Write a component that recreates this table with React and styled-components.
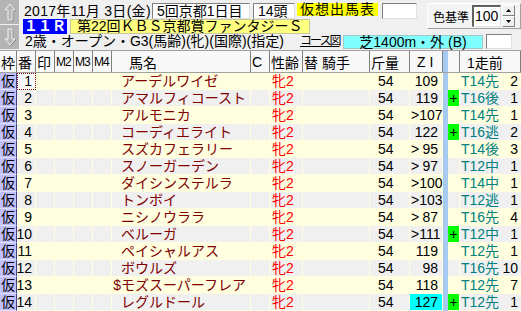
import styled, { createGlobalStyle } from "styled-components";

const GlobalStyle = createGlobalStyle`
  body {
    margin: 0;
    overflow: hidden;
    background: #f0f0f0;
    font-family: "Liberation Sans", "Noto Sans CJK JP", sans-serif;
    font-size: 14px;
    color: #000;
  }
`;

const COLS = "17px 19px 19px 19px 19px 19px 139px 19px 33px 67px 40px 33px 5px 12px 1fr";

const horses = [
  { no: 1, name: "アーデルワイゼ", zi: 109, prev: "T14先", rank: "2" },
  { no: 2, name: "アマルフィコースト", zi: 119, plus: true, prev: "T16後", rank: "1" },
  { no: 3, name: "アルモニカ", zi: 107, gt: true, prev: "T14先", rank: "1" },
  { no: 4, name: "コーディエライト", zi: 122, plus: true, prev: "T16逃", rank: "2" },
  { no: 5, name: "スズカフェラリー", zi: 95, gt: true, prev: "T14後", rank: "3" },
  { no: 6, name: "スノーガーデン", zi: 97, gt: true, prev: "T12中", rank: "1" },
  { no: 7, name: "ダイシンステルラ", zi: 100, gt: true, prev: "T14中", rank: "1" },
  { no: 8, name: "トンボイ", zi: 103, gt: true, prev: "T12逃", rank: "1" },
  { no: 9, name: "ニシノウララ", zi: 87, gt: true, prev: "T16先", rank: "4" },
  { no: 10, name: "ベルーガ", zi: 111, gt: true, plus: true, prev: "T12中", rank: "1" },
  { no: 11, name: "ペイシャルアス", zi: 119, prev: "T12先", rank: "1" },
  { no: 12, name: "ボウルズ", zi: 98, prev: "T16先", rank: "10" },
  { no: 13, name: "モズスーパーフレア", mark: "$", zi: 118, prev: "T12先", rank: "7" },
  { no: 14, name: "レグルドール", zi: 127, top: true, plus: true, prev: "T12先", rank: "1" },
];

const headers = ["枠", "番", "印", "M2", "M3", "M4", "馬名", "C", "性齢", "替 騎手", "斤量", "Z I", "", "", "1走前"];

// arrow shapes for the record-navigation buttons
const UP = "10,4 15,10 12,10 12,20 8,20 8,10 5,10";
const DOWN = "10,20 15,14 12,14 12,4 8,4 8,14 5,14";

const Arrow = ({ points }) => (
  <svg width="19" height="24" viewBox="0 0 19 24">
    <polygon points={points} fill="none" stroke="#7c7c7c" transform="translate(0.7 0.7)" />
    <polygon points={points} fill="#b4b4b4" stroke="#f6f6f6" />
  </svg>
);

const App = () => (
  <Screen>
    <GlobalStyle />
    <Top>
      <Nav>
        <ArrowButton>
          <Arrow points={UP} />
        </ArrowButton>
        <ArrowButton>
          <Arrow points={DOWN} />
        </ArrowButton>
      </Nav>
      <Info>
        <Upper>
          <Lines>
            <Line $h={16}>
              <DateText>2017年11月 3日(金)</DateText>
              <Field $w={98}>5回京都1日目</Field>
              <Field $w={42}>14頭</Field>
              <Tag>仮想出馬表</Tag>
              <Field $w={35} />
            </Line>
            <Line $h={15}>
              <RaceNo>１１Ｒ</RaceNo>
              <RaceName>第22回ＫＢＳ京都賞ファンタジーＳ</RaceName>
            </Line>
          </Lines>
          <ColorPanel>
            <PanelLabel>色基準</PanelLabel>
            <NumInput>100</NumInput>
            <Spin>
              <SpinButton>
                <svg width="5" height="3" viewBox="0 0 5 3"><polygon points="2.5,0 5,3 0,3" fill="#000" /></svg>
              </SpinButton>
              <SpinButton>
                <svg width="5" height="3" viewBox="0 0 5 3"><polygon points="0,0 5,0 2.5,3" fill="#000" /></svg>
              </SpinButton>
            </Spin>
          </ColorPanel>
        </Upper>
        <Line $h={15}>
          <Conditions>2歳・オープン・G3(馬齢)(牝)(国際)(指定)</Conditions>
          <CourseLink>コース図</CourseLink>
          <CourseBox>芝1400m・外 (B)</CourseBox>
          <Field $w={26} />
        </Line>
      </Info>
    </Top>

    <HeaderRow>
      {headers.map((h, i) => (
        <HeadCell
          key={i}
          $bar={i === 12}
          $tight={i >= 3 && i <= 5}
          $pad={i === 6 ? 17 : i === 14 || i === 11 ? 7 : 1}
        >
          {h}
        </HeadCell>
      ))}
    </HeaderRow>

    {horses.map((h, i) => (
      <Row key={h.no} $alt={i % 2 === 1}>
        <WakuCell>仮</WakuCell>
        <NumCell $focus={i === 0}>{h.no}</NumCell>
        <Cell />
        <Cell />
        <Cell />
        <Cell />
        <NameCell>
          <Mark>{h.mark}</Mark>
          {h.name}
        </NameCell>
        <Cell />
        <SexCell>牝2</SexCell>
        <Cell />
        <WeightCell>54</WeightCell>
        <ZiCell $top={h.top}>
          <span>{h.gt ? ">" : ""}</span>
          <span>{h.zi}</span>
        </ZiCell>
        <BarCell />
        <PlusCell $on={h.plus}>{h.plus ? "+" : ""}</PlusCell>
        <PrevCell>
          <Course>{h.prev}</Course>
          <Rank>{h.rank}</Rank>
        </PrevCell>
      </Row>
    ))}
  </Screen>
);

export default App;

const Screen = styled.div`
  width: 521px;
  height: 311px;
  overflow: hidden;
  background: #ffffe0;
`;

const Top = styled.div`
  box-sizing: border-box;
  display: flex;
  height: 51px;
  background: #f0f0f0;
  border-bottom: 1px solid #a0a0a0;
`;

const Nav = styled.div`
  display: flex;
  flex-direction: column;
  gap: 1px;
  width: 19px;
  margin-right: 1px;
`;

const ArrowButton = styled.div`
  height: 24px;
  background: #b4b4b4;
  svg {
    display: block;
  }
`;

const Info = styled.div`
  flex: 1;
  display: flex;
  flex-direction: column;
  padding: 3px 0 0 3px;
`;

const Upper = styled.div`
  display: flex;
`;

const Lines = styled.div`
  flex: 1;
  display: flex;
  flex-direction: column;
`;

const Line = styled.div`
  display: flex;
  align-items: center;
  height: ${(p) => p.$h}px;
  line-height: ${(p) => p.$h}px;
  white-space: nowrap;
`;

const DateText = styled.span`
  width: 128px;
  margin-left: 1px;
  letter-spacing: 0.3px;
`;

const Field = styled.div`
  box-sizing: border-box;
  width: ${(p) => p.$w}px;
  height: 100%;
  margin-right: 3px;
  padding-left: 4px;
  background: #fff;
  border-top: 1px solid #808080;
  border-left: 1px solid #808080;
  border-right: 1px solid #e0e0e0;
  border-bottom: 1px solid #e0e0e0;
  line-height: 14px;
`;

const Tag = styled.div`
  box-sizing: border-box;
  width: 81px;
  height: 13px;
  margin: 0 4px 3px -1px;
  background: #ffff00;
  text-align: center;
  line-height: 13px;
  letter-spacing: 1px;
`;

const RaceNo = styled.div`
  box-sizing: border-box;
  width: 44px;
  height: 15px;
  background: #0000ff;
  color: #fff;
  font-weight: bold;
  text-align: center;
  line-height: 15px;
  margin-right: 3px;
`;

const RaceName = styled.div`
  box-sizing: border-box;
  width: 240px;
  height: 15px;
  padding-left: 6px;
  background: #ffff80;
  border: 1px solid #c8c8a0;
  line-height: 13px;
`;

const ColorPanel = styled.div`
  box-sizing: border-box;
  display: flex;
  align-items: center;
  width: 94px;
  height: 26px;
  padding-left: 5px;
  background: #f4f4f4;
  border-top: 1px solid #fff;
  border-left: 1px solid #fff;
  border-bottom: 1px solid #a0a0a0;
  border-right: 1px solid #a0a0a0;
`;

const PanelLabel = styled.span`
  font-size: 12px;
  margin-right: 3px;
`;

const NumInput = styled.div`
  box-sizing: border-box;
  width: 29px;
  height: 22px;
  padding-left: 1px;
  background: #fff;
  border-top: 2px solid #606060;
  border-left: 2px solid #606060;
  border-right: 1px solid #e0e0e0;
  border-bottom: 1px solid #e0e0e0;
  line-height: 19px;
`;

const Spin = styled.div`
  display: flex;
  flex-direction: column;
  margin-left: 1px;
`;

const SpinButton = styled.div`
  box-sizing: border-box;
  display: flex;
  align-items: center;
  justify-content: center;
  width: 13px;
  height: 11px;
  background: #f0f0f0;
  border-top: 1px solid #fff;
  border-left: 1px solid #fff;
  border-right: 1px solid #808080;
  border-bottom: 1px solid #808080;
`;

const Conditions = styled.span`
  width: 275px;
  margin-left: 2px;
`;

const CourseLink = styled.span`
  width: 43px;
  font-size: 12px;
  letter-spacing: -2px;
  text-decoration: underline;
`;

const CourseBox = styled.div`
  box-sizing: border-box;
  width: 140px;
  height: 14px;
  margin-right: 3px;
  background: #80ffff;
  border: 1px solid #a0c8c8;
  text-align: center;
  line-height: 12px;
`;

const HeaderRow = styled.div`
  display: grid;
  grid-template-columns: ${COLS};
  height: 22px;
  box-sizing: border-box;
  background: #f8f8f8;
  border-bottom: 1px solid #a0a0a0;
`;

const HeadCell = styled.div`
  box-sizing: border-box;
  display: flex;
  align-items: center;
  padding-left: ${(p) => p.$pad}px;
  border-right: 1px solid ${(p) => (p.$bar ? "#a6caf0" : "#808080")};
  background: ${(p) => (p.$bar ? "#a6caf0" : "transparent")};
  font-size: ${(p) => (p.$tight ? "12px" : "14px")};
  letter-spacing: ${(p) => (p.$tight ? "-1px" : "0")};
  white-space: nowrap;
`;

const Row = styled.div`
  display: grid;
  grid-template-columns: ${COLS};
  height: 17px;
  background: ${(p) => (p.$alt ? "#f0f0f0" : "#ffffe0")};
`;

const Cell = styled.div`
  box-sizing: border-box;
  display: flex;
  align-items: center;
  height: 17px;
  padding: 0 1px;
  border-right: 1px solid #ffffe0;
  border-bottom: 1px solid #ffffe0;
  white-space: nowrap;
  line-height: 16px;
`;

const WakuCell = styled(Cell)`
  background: #c0c0ff;
  border-right-color: #404080;
  border-bottom-color: #e0e0ff;
`;

const NumCell = styled(Cell)`
  justify-content: flex-end;
  padding-right: 3px;
  background: ${(p) => (p.$focus ? "#fff" : "transparent")};
  outline: ${(p) => (p.$focus ? "1px dotted #800000" : "none")};
  outline-offset: -1px;
`;

const NameCell = styled(Cell)`
  color: #800000;
`;

const Mark = styled.span`
  display: inline-block;
  width: 8px;
  text-align: right;
`;

const SexCell = styled(Cell)`
  color: #ff0000;
  padding-left: 2px;
`;

const WeightCell = styled(Cell)`
  padding-left: 8px;
`;

const ZiCell = styled(Cell)`
  justify-content: space-between;
  padding-right: 4px;
  background: ${(p) => (p.$top ? "#00ffff" : "transparent")};
`;

const BarCell = styled.div`
  background: #a6caf0;
`;

const PlusCell = styled(Cell)`
  justify-content: center;
  background: ${(p) => (p.$on ? "#00ff00" : "transparent")};
`;

const PrevCell = styled(Cell)`
  border-right: none;
  padding-right: 3px;
`;

const Course = styled.span`
  color: #008080;
`;

const Rank = styled.span`
  margin-left: auto;
`;
